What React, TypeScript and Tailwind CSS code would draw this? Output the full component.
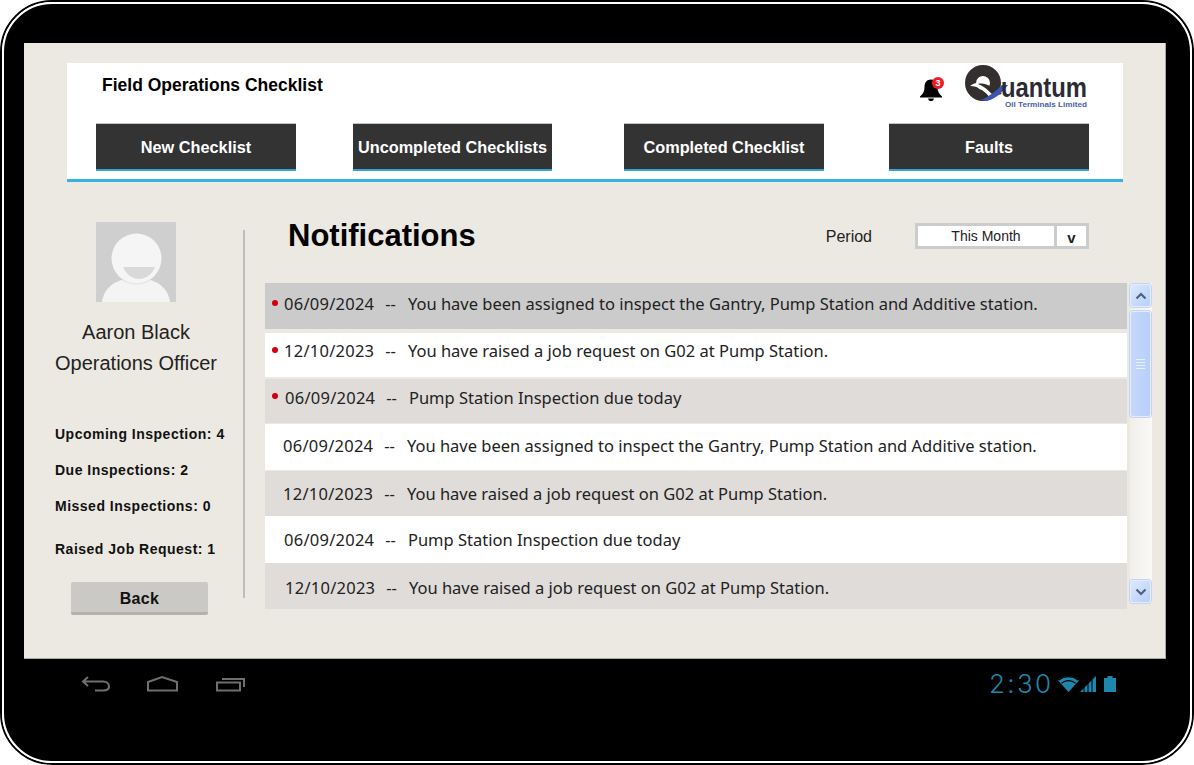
const sans = "font-['Liberation_Sans',Arial,sans-serif]"

const tabs = [
  { label: "New Checklist", cls: "w-[200px] ml-[29px]" },
  { label: "Uncompleted Checklists", cls: "w-[199px] ml-[57px]" },
  { label: "Completed Checklist", cls: "w-[200px] ml-[72px]" },
  { label: "Faults", cls: "w-[200px] ml-[65px]" },
]

const assigned = "You have been assigned to inspect the Gantry, Pump Station and Additive station."
const raised = "You have raised a job request on G02 at Pump Station."
const due = "Pump Station Inspection due today"

const rows = [
  { date: "06/09/2024", text: assigned, bg: "bg-[#cbcbcb]", h: "h-[46px] mb-[4px] pb-[4px]", pl: "pl-[19px]", dot: "top-[17px]" },
  { date: "12/10/2023", text: raised, bg: "bg-white", h: "h-[44px] mb-[2px] pb-[8px]", pl: "pl-[19px]", dot: "top-[14px]" },
  { date: "06/09/2024", text: due, bg: "bg-[#dfdcd9]", h: "h-[44px] mb-[1px] pb-[6px]", pl: "pl-[20px]", dot: "top-[14px]" },
  { date: "06/09/2024", text: assigned, bg: "bg-white", h: "h-[46px] mb-[1px] pb-[2px]", pl: "pl-[18px]", dot: "" },
  { date: "12/10/2023", text: raised, bg: "bg-[#dfdcd9]", h: "h-[45px] pt-[2px]", pl: "pl-[18px]", dot: "" },
  { date: "06/09/2024", text: due, bg: "bg-white", h: "h-[47px] pt-[2px]", pl: "pl-[19px]", dot: "" },
  { date: "12/10/2023", text: raised, bg: "bg-[#dfdcd9]", h: "h-[46px] pt-[4px]", pl: "pl-[20px]", dot: "" },
]

function Logo() {
  return (
    <svg width="124" height="46" viewBox="0 0 124 46" className="block">
      <circle cx="19" cy="19" r="12.5" fill="none" stroke="#332f2e" strokeWidth="11" />
      <path d="M6 22 C16 14 24 22 31 30 L28 36 C20 26 14 22 6 22Z" fill="#ffffff" />
      <path d="M14 20 C22 18 30 24 38 30 L30 32 C24 26 20 22 14 20Z" fill="#332f2e" />
      <path d="M17 36 C24 33 31 28 38 21 L44 21 C38 29 30 36 22 37Z" fill="#3d55b0" />
      <text transform="translate(37 33) scale(1 1.25)" fontFamily="'Liberation Sans', Arial, sans-serif" fontWeight="700" fontSize="22" fill="#2b2c33" textLength="86" lengthAdjust="spacingAndGlyphs">uantum</text>
      <text x="41" y="43" fontFamily="'Liberation Sans', Arial, sans-serif" fontWeight="700" fontSize="8" fill="#4a5fa8" textLength="82" lengthAdjust="spacingAndGlyphs">Oil Terminals Limited</text>
    </svg>
  )
}

function BellIcon() {
  return (
    <svg width="24" height="24" viewBox="0 0 24 24" className="block">
      <path d="M12 1.5 C7.5 1.5 5.5 5 5.5 9 C5.5 13.5 4 16 1 18.5 L1 19.5 L23 19.5 L23 18.5 C20 16 18.5 13.5 18.5 9 C18.5 5 16.5 1.5 12 1.5Z" fill="#000" />
      <path d="M9 20.5 C9.5 22.5 10.5 23 12 23 C13.5 23 14.5 22.5 15 20.5Z" fill="#000" />
    </svg>
  )
}

function Avatar() {
  return (
    <svg width="80" height="80" viewBox="0 0 80 80" className="block">
      <rect width="80" height="80" fill="#cfcfcf" />
      <path d="M6 80 C8 64 22 56 40 56 C58 56 72 64 74 80Z" fill="#f4f4f4" />
      <circle cx="40.5" cy="36.5" r="26" fill="#cfcfcf" opacity="0.5" />
      <circle cx="40.5" cy="36.5" r="25" fill="#f5f5f5" />
      <path d="M27 45 L59 45 C56 53 49 57 43 57 C36 57 30 52 27 45Z" fill="#d9d9d9" />
    </svg>
  )
}

function ScrollBtn({ up }: { up: boolean }) {
  return (
    <div className="w-[21px] h-[23px] rounded-[3px] border border-[#e3ecfb] bg-[linear-gradient(135deg,#dce8fd,#b7cffa)] shadow-[0_0_0_1px_#c4d4f2] flex items-center justify-center">
      <svg width="12" height="8" viewBox="0 0 12 8">
        <path d={up ? "M1.5 6.5 L6 2 L10.5 6.5" : "M1.5 1.5 L6 6 L10.5 1.5"} fill="none" stroke="#4d6185" strokeWidth="2.2" />
      </svg>
    </div>
  )
}

export default function App() {
  return (
    <div className={`w-[1194px] h-[765px] bg-white overflow-hidden ${sans}`}>
      <div className="w-full h-full rounded-[52px] border-2 border-black">
        <div className="w-full h-full rounded-[50px] border-2 border-white bg-black pt-[39px] pl-[20px] overflow-hidden">
          {/* screen */}
          <div className="w-[1142px] h-[616px] bg-[#ece9e2] pt-[20px] border-r border-b border-[#a9a8a4]">
            {/* header */}
            <div className="ml-[43px] w-[1056px] h-[119px] bg-white border-b-[3px] border-[#35b4e4]">
              <div className="h-[60px] flex items-start">
                <div className="ml-[35px] mt-[12px] text-[17.5px] leading-[20px] font-bold text-black">Field Operations Checklist</div>
                <div className="ml-auto mr-[35px] mt-[1px] flex items-start">
                  <div className="relative mr-[21px] mt-[14px] w-[24px] h-[24px]">
                    <BellIcon />
                    <span className="absolute -top-[1px] right-[-1px] w-[12px] h-[12px] rounded-full bg-[#ee1c25] text-white text-[9px] leading-[12px] font-bold text-center">3</span>
                  </div>
                  <Logo />
                </div>
              </div>
              <div className="flex">
                {tabs.map((t) => (
                  <div key={t.label} className={`${t.cls} h-[48px] bg-[#333333] border-t border-[#c4c4c4] border-b-2 border-b-[#35a5d6] text-white font-bold text-[16.3px] pt-[1px] flex items-center justify-center whitespace-nowrap`}>
                    {t.label}
                  </div>
                ))}
              </div>
            </div>

            {/* main */}
            <div className="flex pl-[31px]">
              <div className="w-[188px] shrink-0 pt-[40px]">
                <div className="ml-[41px] w-[80px]"><Avatar /></div>
                <div className="w-[162px] mt-[15px] text-center text-[20px] leading-[31px] text-[#222]">
                  <div>Aaron Black</div>
                  <div>Operations Officer</div>
                </div>
                <div className="mt-[47px] text-[14px] font-bold text-[#111] tracking-[0.5px] whitespace-nowrap leading-[16px]">
                  <div>Upcoming Inspection: 4</div>
                  <div className="mt-[20px]">Due Inspections: 2</div>
                  <div className="mt-[20px]">Missed Inspections: 0</div>
                  <div className="mt-[27px]">Raised Job Request: 1</div>
                </div>
                <div className="ml-[16px] mt-[25px] w-[137px] h-[33px] rounded-[2px] bg-[#cbc9c5] border-b-[3px] border-[#b3b1ad] pt-[3px] text-[16px] font-bold text-[#111] flex items-center justify-center tracking-[0.3px]">
                  Back
                </div>
              </div>

              <div className="w-[2px] h-[368px] mt-[48px] bg-[#bdbdbb] shrink-0" />

              <div className="ml-[20px] w-[887px] shrink-0">
                <div className="h-[101px] flex items-start">
                  <div className="ml-[23px] mt-[34px] text-[31px] leading-[40px] font-bold text-black">Notifications</div>
                  <div className="ml-[350px] mt-[45px] text-[16px] leading-[20px] text-[#222]">Period</div>
                  <div className="ml-[43px] mt-[41px] w-[174px] h-[26px] border-[3px] border-[#cccccc] bg-white flex text-[#222]">
                    <div className="flex-1 text-[14px] leading-[20px] text-center">This Month</div>
                    <div className="w-[32px] border-l-[3px] border-[#cccccc] text-[15px] leading-[23px] font-bold text-center">v</div>
                  </div>
                </div>

                <div className="flex items-start">
                  <div className="w-[862px] shrink-0">
                    {rows.map((r, i) => (
                      <div key={i} className={`${r.bg} ${r.h} ${r.pl} relative flex items-center font-['Noto_Sans',sans-serif] text-[16.5px] text-[#222] whitespace-nowrap`}>
                        {r.dot && <span className={`absolute left-[7px] ${r.dot} w-[6px] h-[6px] rounded-full bg-[#d0000c]`} />}
                        <span className="tracking-[0.25px]">{r.date}</span>
                        <span className="ml-[11px] mr-[12px]">--</span>
                        <span>{r.text}</span>
                      </div>
                    ))}
                  </div>
                  <div className="ml-[3px] w-[22px] h-[320px] bg-[linear-gradient(90deg,#f0efea,#faf9f6)] flex flex-col items-start">
                    <div className="mt-[1px]"><ScrollBtn up /></div>
                    <div className="mt-[4px] w-[21px] h-[106px] rounded-[3px] border border-[#e3ecfb] bg-[linear-gradient(90deg,#c5d8fb,#b8cffa)] shadow-[0_0_0_1px_#c4d4f2] flex flex-col items-center justify-center gap-[2px]">
                      <div className="w-[9px] h-[1px] bg-[#e9f0fd]" />
                      <div className="w-[9px] h-[1px] bg-[#e9f0fd]" />
                      <div className="w-[9px] h-[1px] bg-[#e9f0fd]" />
                      <div className="w-[9px] h-[1px] bg-[#e9f0fd]" />
                    </div>
                    <div className="mt-auto"><ScrollBtn up={false} /></div>
                  </div>
                </div>
              </div>
            </div>
          </div>

          {/* android bar */}
          <div className="mt-[15px] h-[20px] flex items-center">
            <svg width="170" height="18" viewBox="0 0 170 18" className="ml-[57px] block" fill="none" stroke="#6f6f6f" strokeWidth="2">
              <path d="M7 2 L2 6.5 L7 11 M2 6.5 H22 C26 6.5 28 9 28 11.5 C28 14 26 15.5 22 15.5 H14" />
              <path d="M67 15.5 V7 L81 2 L96 7 V15.5Z" />
              <path d="M136 15.5 V7.5 H159 V15.5Z M141 4 H163 V12" />
            </svg>
            <div className="ml-[738px] w-[67px] text-[#1f86ad] font-['Inter',sans-serif] font-light text-[26px] leading-[20px] tracking-[2.3px] whitespace-nowrap">2:30</div>
            <svg width="60" height="18" viewBox="0 0 60 18" className="ml-[1px] block">
              <path d="M1 5.5 C7 -0.5 16 -0.5 22 5.5 L11.5 17Z" fill="#1f86ad" />
              <path d="M4.5 8.2 C8.5 4.8 14.5 4.8 18.5 8.2 M1.8 5 C7.5 0.6 15.5 0.6 21.2 5" fill="none" stroke="#000" strokeWidth="1.2" />
              <path d="M23 17 H39 V1Z" fill="#1f86ad" />
              <path d="M27 17 V10 M31 17 V7 M35 17 V3" stroke="#000" strokeWidth="1" />
              <rect x="47" y="3" width="12" height="14" fill="#1f86ad" />
              <rect x="50.5" y="1" width="5" height="2" fill="#1f86ad" />
            </svg>
          </div>
        </div>
      </div>
    </div>
  )
}
